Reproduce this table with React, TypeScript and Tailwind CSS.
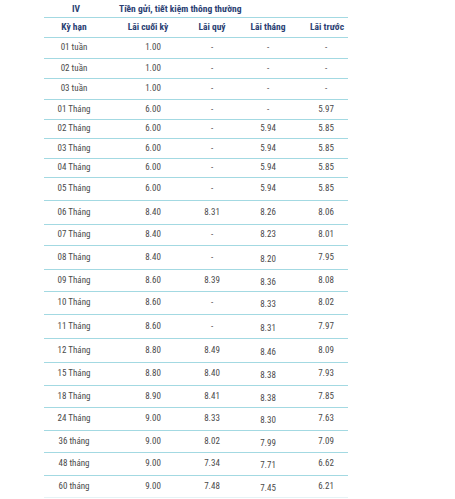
import React from "react";

type Row = { k: string; a: string; q: string; t: string; p: string; h: number; low?: boolean };

const rows: Row[] = [
  { k: "01 tuần", a: "1.00", q: "-", t: "-", p: "-", h: 21 },
  { k: "02 tuần", a: "1.00", q: "-", t: "-", p: "-", h: 20 },
  { k: "03 tuần", a: "1.00", q: "-", t: "-", p: "-", h: 21 },
  { k: "01 Tháng", a: "6.00", q: "-", t: "-", p: "5.97", h: 20 },
  { k: "02 Tháng", a: "6.00", q: "-", t: "5.94", p: "5.85", h: 19 },
  { k: "03 Tháng", a: "6.00", q: "-", t: "5.94", p: "5.85", h: 20 },
  { k: "04 Tháng", a: "6.00", q: "-", t: "5.94", p: "5.85", h: 19 },
  { k: "05 Tháng", a: "6.00", q: "-", t: "5.94", p: "5.85", h: 23 },
  { k: "06 Tháng", a: "8.40", q: "8.31", t: "8.26", p: "8.06", h: 24 },
  { k: "07 Tháng", a: "8.40", q: "-", t: "8.23", p: "8.01", h: 21 },
  { k: "08 Tháng", a: "8.40", q: "-", t: "8.20", p: "7.95", h: 24, low: true },
  { k: "09 Tháng", a: "8.60", q: "8.39", t: "8.36", p: "8.08", h: 22, low: true },
  { k: "10 Tháng", a: "8.60", q: "-", t: "8.33", p: "8.02", h: 23, low: true },
  { k: "11 Tháng", a: "8.60", q: "-", t: "8.31", p: "7.97", h: 24, low: true },
  { k: "12 Tháng", a: "8.80", q: "8.49", t: "8.46", p: "8.09", h: 24, low: true },
  { k: "15 Tháng", a: "8.80", q: "8.40", t: "8.38", p: "7.93", h: 23, low: true },
  { k: "18 Tháng", a: "8.90", q: "8.41", t: "8.38", p: "7.85", h: 22, low: true },
  { k: "24 Tháng", a: "9.00", q: "8.33", t: "8.30", p: "7.63", h: 23, low: true },
  { k: "36 tháng", a: "9.00", q: "8.02", t: "7.99", p: "7.09", h: 22, low: true },
  { k: "48 tháng", a: "9.00", q: "7.34", t: "7.71", p: "6.62", h: 23, low: true },
  { k: "60 tháng", a: "9.00", q: "7.48", t: "7.45", p: "6.21", h: 22, low: true },
];

const font = { fontFamily: '"Liberation Sans Narrow", "Roboto Condensed", "Liberation Sans", sans-serif' };

export default function App() {
  return (
    <div className="w-[455px] h-[499px] bg-white overflow-hidden" style={font}>
      <div className="ml-[44px] w-[304px]">
        <div className="grid grid-cols-[60px_244px] h-[18px] items-center text-[9.5px] font-bold text-[#2b3f73] border-b-[1.5px] border-[#a3d9e2] pt-[2px]">
          <div className="text-center pl-[4px]">IV</div>
          <div className="pl-[15px]">Tiền gửi, tiết kiệm thông thường</div>
        </div>
        <div className="grid grid-cols-[60px_88px_40px_72px_44px] h-[20px] items-center text-[9.5px] font-bold text-[#2b3f73] border-b-[1.5px] border-[#a3d9e2]">
          <div className="text-center">Kỳ hạn</div>
          <div className="text-center">Lãi cuối kỳ</div>
          <div className="text-center">Lãi quý</div>
          <div className="text-center">Lãi tháng</div>
          <div className="text-center pl-[2px]">Lãi trước</div>
        </div>
        {rows.map((r, i) => (
          <div
            key={i}
            className={`grid grid-cols-[60px_88px_40px_72px_44px] items-center text-[9px] text-[#4a4a4a] ${i === rows.length - 1 ? "border-b-[1.5px] border-[#e6f3f6]" : "border-b-[1.5px] border-[#a3d9e2]"}`}
            style={{ height: r.h }}
          >
            <div className="text-center">{r.k}</div>
            <div className="text-center pl-[10px]">{r.a}</div>
            <div className="text-center">{r.q}</div>
            <div className={`text-center ${r.low ? "pt-[4px]" : ""}`}>{r.t}</div>
            <div className="text-center">{r.p}</div>
          </div>
        ))}
      </div>
    </div>
  );
}
